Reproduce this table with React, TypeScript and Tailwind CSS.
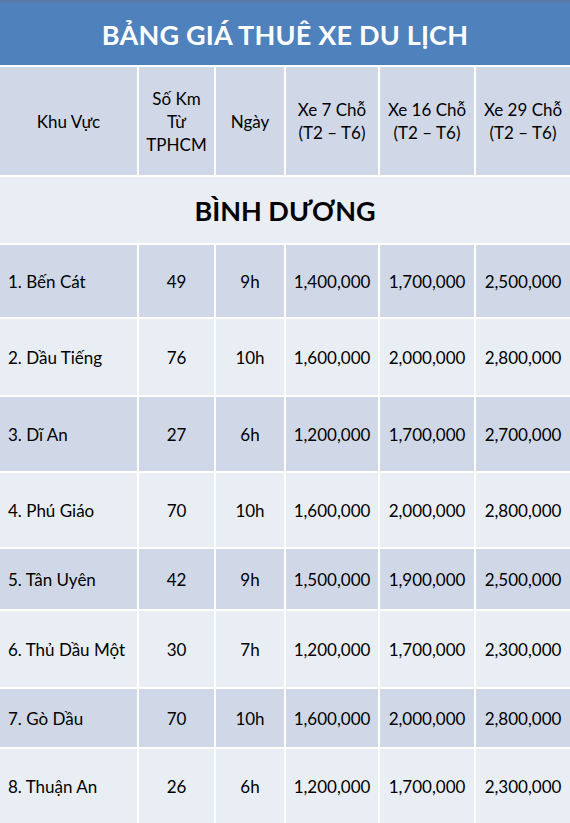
import React from 'react';

type Row = {
  name: string;
  km: string;
  day: string;
  p7: string;
  p16: string;
  p29: string;
  h: string;
  shaded: boolean;
};

const rows: Row[] = [
  { name: '1. Bến Cát', km: '49', day: '9h', p7: '1,400,000', p16: '1,700,000', p29: '2,500,000', h: 'h-[72px]', shaded: true },
  { name: '2. Dầu Tiếng', km: '76', day: '10h', p7: '1,600,000', p16: '2,000,000', p29: '2,800,000', h: 'h-[76px]', shaded: false },
  { name: '3. Dĩ An', km: '27', day: '6h', p7: '1,200,000', p16: '1,700,000', p29: '2,700,000', h: 'h-[74px]', shaded: true },
  { name: '4. Phú Giáo', km: '70', day: '10h', p7: '1,600,000', p16: '2,000,000', p29: '2,800,000', h: 'h-[74px]', shaded: false },
  { name: '5. Tân Uyên', km: '42', day: '9h', p7: '1,500,000', p16: '1,900,000', p29: '2,500,000', h: 'h-[60px]', shaded: true },
  { name: '6. Thủ Dầu Một', km: '30', day: '7h', p7: '1,200,000', p16: '1,700,000', p29: '2,300,000', h: 'h-[76px]', shaded: false },
  { name: '7. Gò Dầu', km: '70', day: '10h', p7: '1,600,000', p16: '2,000,000', p29: '2,800,000', h: 'h-[58px]', shaded: true },
  { name: '8. Thuận An', km: '26', day: '6h', p7: '1,200,000', p16: '1,700,000', p29: '2,300,000', h: 'h-[75px]', shaded: false },
];

const cols = 'grid grid-cols-[137px_75px_68px_92px_94px_94px] gap-x-[2px]';

function Cell({ children, left, bg }: { children: React.ReactNode; left?: boolean; bg: string }) {
  return (
    <div className={`${bg} flex items-center ${left ? 'justify-start pl-[8px]' : 'justify-center text-center'}`}>
      {children}
    </div>
  );
}

export default function App() {
  return (
    <div className="w-[570px] h-[823px] overflow-hidden bg-white text-black font-['Lato','Open_Sans',sans-serif] text-[17px] leading-[23px]">
      <div className="h-[65px] bg-[#4f81bd] border-t-[3px] border-[#5a7aa8] flex items-center justify-center">
        <h1 className="text-white font-bold text-[27px] tracking-[0.2px]">BẢNG GIÁ THUÊ XE DU LỊCH</h1>
      </div>
      <div className="flex flex-col gap-y-[2px] pt-[2px]">
        <div className={`${cols} h-[108px]`}>
          <Cell bg="bg-[#d0d8e8]">Khu Vực</Cell>
          <Cell bg="bg-[#d0d8e8]">
            <span>Số Km<br />Từ<br />TPHCM</span>
          </Cell>
          <Cell bg="bg-[#d0d8e8]">Ngày</Cell>
          <Cell bg="bg-[#d0d8e8]">
            <span>Xe 7 Chỗ<br />(T2 – T6)</span>
          </Cell>
          <Cell bg="bg-[#d0d8e8]">
            <span>Xe 16 Chỗ<br />(T2 – T6)</span>
          </Cell>
          <Cell bg="bg-[#d0d8e8]">
            <span>Xe 29 Chỗ<br />(T2 – T6)</span>
          </Cell>
        </div>
        <div className="h-[66px] bg-[#e9edf4] flex items-center justify-center">
          <h2 className="font-bold text-[27px]">BÌNH DƯƠNG</h2>
        </div>
        {rows.map((r) => {
          const bg = r.shaded ? 'bg-[#d0d8e8]' : 'bg-[#e9edf4]';
          return (
            <div key={r.name} className={`${cols} ${r.h}`}>
              <Cell bg={bg} left>{r.name}</Cell>
              <Cell bg={bg}>{r.km}</Cell>
              <Cell bg={bg}>{r.day}</Cell>
              <Cell bg={bg}>{r.p7}</Cell>
              <Cell bg={bg}>{r.p16}</Cell>
              <Cell bg={bg}>{r.p29}</Cell>
            </div>
          );
        })}
      </div>
    </div>
  );
}
